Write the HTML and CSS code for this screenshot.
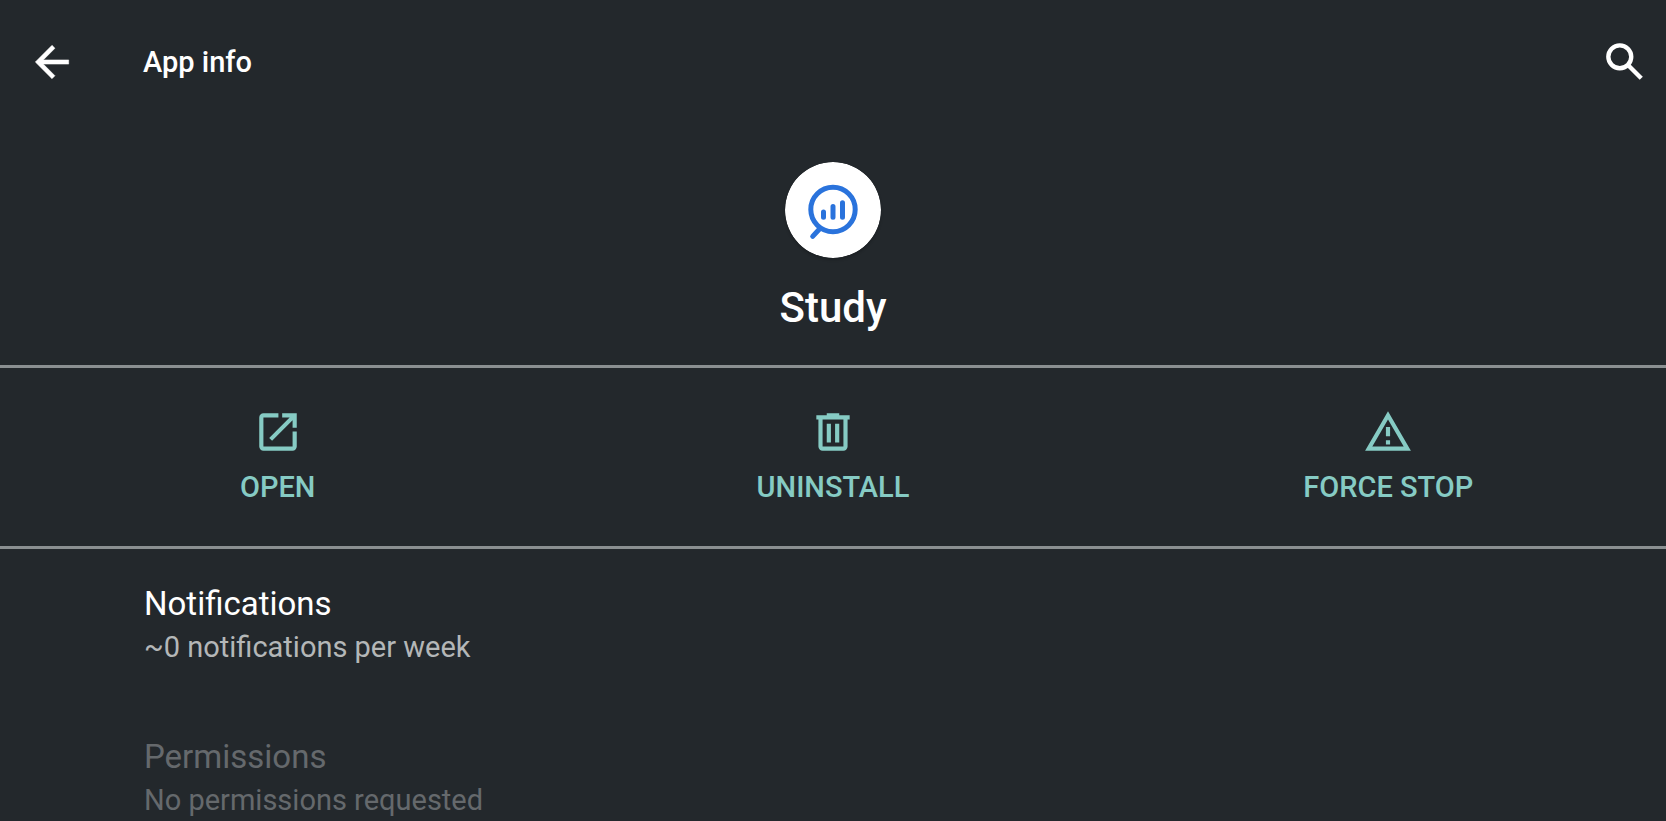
FILE: index.html
```
<!DOCTYPE html>
<html lang="en">
<head>
    <meta charset="UTF-8">
    <meta name="viewport" content="width=device-width, initial-scale=1.0">
    <title>App info</title>
    <link rel="stylesheet" href="styles.css">
</head>
<body>
    <header class="toolbar">
        <button class="icon-button" aria-label="Back">
            <svg viewBox="0 0 24 24"><path stroke="currentColor" stroke-width=".25" d="M20 11H7.83l5.59-5.59L12 4l-8 8 8 8 1.41-1.41L7.83 13H20v-2z"/></svg>
        </button>
        <h1>App info</h1>
        <button class="icon-button" aria-label="Search">
            <svg viewBox="0 0 24 24"><g fill="none" stroke="currentColor" stroke-width="2.1"><circle cx="9.5" cy="9.5" r="5.5"/><path d="M13.3 13.3l6.5 6.5"/></g></svg>
        </button>
    </header>

    <main>
        <section class="app-header">
            <svg class="app-icon" viewBox="0 0 96 96">
                <circle cx="48" cy="48" r="48" fill="#fff"/>
                <g fill="none" stroke="#2a73dc" stroke-width="5" stroke-linecap="round">
                    <circle cx="48" cy="47.5" r="22.2"/>
                    <path d="M34.5 67l-6.8 7.4M38.5 50v5.3M48 44.5v10.8M57.5 40.7v14.6"/>
                </g>
            </svg>
            <h2>Study</h2>
        </section>

        <div class="actions">
            <button class="action">
                <svg viewBox="0 0 24 24"><path d="M12.2 3H5a2 2 0 0 0-2 2v14a2 2 0 0 0 2 2h14a2 2 0 0 0 2-2v-7.2h-2V19H5V5h7.2V3zM14 3v2h3.59l-9.83 9.83 1.41 1.41L19 6.41V10h2V3h-7z"/></svg>
                Open
            </button>
            <button class="action">
                <svg viewBox="0 0 24 24"><path fill-rule="evenodd" d="M9 3h6v1h5v2h-1v13a2 2 0 0 1-2 2H7a2 2 0 0 1-2-2V6H4V4h5V3zM7 6v13h10V6H7zm2 2h2v9H9V8zm4 0h2v9h-2V8z"/></svg>
                Uninstall
            </button>
            <button class="action">
                <svg viewBox="0 0 24 24"><path d="M12 5.99L19.53 19H4.47L12 5.99M12 2L1 21h22L12 2zm1 14h-2v2h2v-2zm0-6.4h-2V14h2V9.6z"/></svg>
                Force stop
            </button>
        </div>

        <ul class="settings">
            <li class="setting">
                <h3>Notifications</h3>
                <p>~0 notifications per week</p>
            </li>
            <li class="setting disabled">
                <h3>Permissions</h3>
                <p>No permissions requested</p>
            </li>
        </ul>
    </main>
</body>
</html>
```
FILE: styles.css
```
* {
    box-sizing: border-box;
    margin: 0;
    padding: 0;
}
body {
    font-family: Roboto, sans-serif;
    background: #23282c;
    color: #fff;
}
button {
    background: none;
    border: none;
    color: inherit;
    font: inherit;
    cursor: pointer;
}
svg {
    display: block;
    fill: currentColor;
}
.toolbar {
    display: flex;
    align-items: center;
    padding: 37px 16px 37px 27px;
}
.toolbar h1 {
    flex: 1;
    margin-left: 66px;
    font-size: 29px;
    font-weight: 500;
    line-height: 50px;
}
.icon-button svg,
.action svg {
    width: 50px;
    height: 50px;
}
.app-header {
    display: flex;
    flex-direction: column;
    align-items: center;
    gap: 25px;
    padding: 38px 0 32px;
    border-bottom: 3px solid #8a8f91;
}
.app-icon {
    width: 96px;
    height: 96px;
    border-radius: 50%;
    box-shadow: 0 2px 3px rgba(0, 0, 0, 0.2);
}
.app-header h2 {
    font-size: 42px;
    font-weight: 500;
    line-height: 50px;
}
.actions {
    display: grid;
    grid-template-columns: repeat(3, 1fr);
    border-bottom: 3px solid #8a8f91;
}
.action {
    display: flex;
    flex-direction: column;
    align-items: center;
    gap: 10px;
    padding: 39px 0;
    color: #86cbc4;
    font-size: 29px;
    font-weight: 500;
    line-height: 40px;
    text-transform: uppercase;
}
.settings {
    list-style: none;
}
.setting {
    padding: 33px 144px 34px;
}
.setting:last-child {
    padding-bottom: 0;
}
.setting h3 {
    font-size: 33px;
    font-weight: 400;
    line-height: 44px;
}
.setting p {
    color: #b4b7b8;
    font-size: 29px;
    line-height: 42px;
}
.disabled h3,
.disabled p {
    color: #65696c;
}
```
